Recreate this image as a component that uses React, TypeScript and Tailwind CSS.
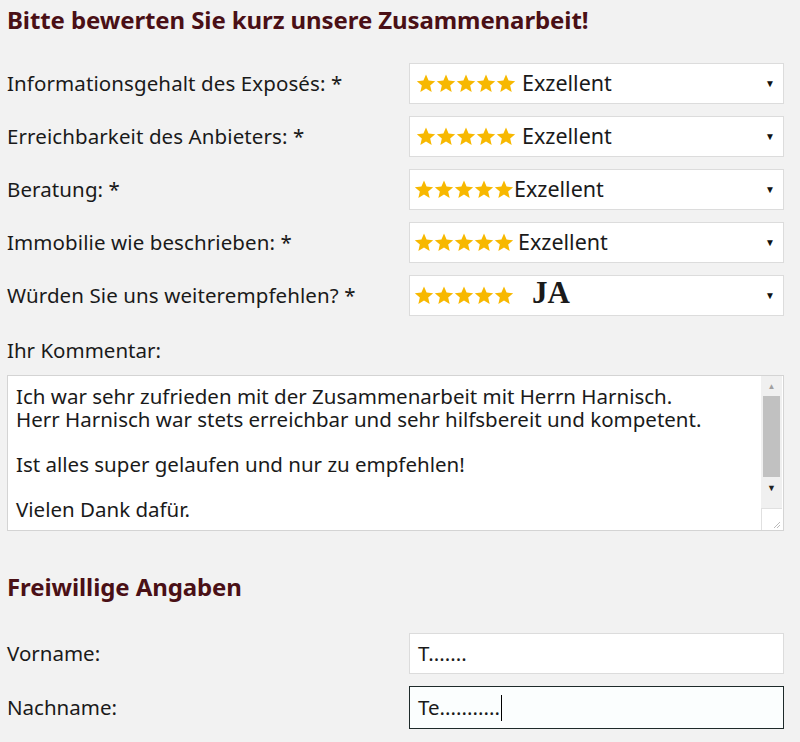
import React from "react";

const rows = [
  { label: "Informationsgehalt des Exposés: *", value: "Exzellent", gap: "gap-[6px]", pl: "pl-[6px]" },
  { label: "Erreichbarkeit des Anbieters: *", value: "Exzellent", gap: "gap-[6px]", pl: "pl-[6px]" },
  { label: "Beratung: *", value: "Exzellent", gap: "gap-0", pl: "pl-[4px]" },
  { label: "Immobilie wie beschrieben: *", value: "Exzellent", gap: "gap-[4px]", pl: "pl-[4px]" },
  { label: "Würden Sie uns weiterempfehlen? *", value: "JA", gap: "gap-[18px]", pl: "pl-[4px]" },
];

function Star() {
  return (
    <svg width="20" height="21" viewBox="0 0 24 24">
      <path
        d="M12 1.2l3.1 7.3 7.9.7-6 5.2 1.8 7.8L12 18.1l-6.8 4.1 1.8-7.8-6-5.2 7.9-.7z"
        fill="#f7b800"
      />
    </svg>
  );
}

function Stars() {
  return (
    <div className="flex">
      {[0, 1, 2, 3, 4].map((i) => (
        <Star key={i} />
      ))}
    </div>
  );
}

export default function App() {
  const sans = "font-['Noto_Sans',sans-serif]";
  return (
    <div className={`w-[800px] h-[742px] bg-[#f2f2f2] text-[#1a1a1a] ${sans} overflow-hidden`}>
      <div className="pl-[7px] pr-[16px] pt-[3px]">
        <h2 className="text-[24px] font-bold text-[#4a1016] leading-[34px] tracking-[-0.1px]">
          Bitte bewerten Sie kurz unsere Zusammenarbeit!
        </h2>

        <div className="mt-[26px] flex flex-col gap-[12px]">
          {rows.map((r) => (
            <div key={r.label} className="flex items-center h-[41px]">
              <div className="w-[402px] text-[20.5px] tracking-[0.1px]">{r.label}</div>
              <div className={`flex-1 h-[41px] bg-white border border-[#dcdcdc] flex items-center ${r.pl} pr-[8px]`}>
                <div className={`flex items-center ${r.gap}`}>
                  <Stars />
                  {r.value === "JA" ? (
                    <span className="font-['Liberation_Serif',serif] font-bold text-[31px] leading-none -mt-[7px]">JA</span>
                  ) : (
                    <span className="text-[21.5px]">{r.value}</span>
                  )}
                </div>
                <span className="ml-auto text-[10px] text-[#111]">▼</span>
              </div>
            </div>
          ))}
        </div>

        <div className="mt-[22px] text-[20.5px] leading-[24px]">Ihr Kommentar:</div>

        <div className="mt-[13px] h-[156px] bg-white border border-[#d4d4d4] flex">
          <div className="flex-1 pl-[8px] pt-[9px] text-[20.5px] leading-[22.5px] text-[#1a1a1a]">
            <p>Ich war sehr zufrieden mit der Zusammenarbeit mit Herrn Harnisch.</p>
            <p>Herr Harnisch war stets erreichbar und sehr hilfsbereit und kompetent.</p>
            <p className="mt-[22.5px]">Ist alles super gelaufen und nur zu empfehlen!</p>
            <p className="mt-[22.5px]">Vielen Dank dafür.</p>
          </div>
          <div className="w-[21px] flex flex-col bg-[#f0f0f0] mr-px">
            <div className="h-[20px] flex items-center justify-center text-[8px] text-[#a0a0a0]">▲</div>
            <div className="h-[81px] mx-[2px] bg-[#c1c1c1]" />
            <div className="flex-1 flex items-start justify-center pt-[4px] text-[9px] text-[#222]">▼</div>
            <div className="h-[22px] bg-white border-l border-t border-[#e0e0e0] flex items-end justify-end pr-[2px] pb-[2px]">
              <svg width="6" height="6" viewBox="0 0 6 6">
                <path d="M6 0L0 6M6 3L3 6" stroke="#aaa" strokeWidth="0.8" />
              </svg>
            </div>
          </div>
        </div>

        <h2 className="mt-[39px] text-[24px] font-bold text-[#4a1016] leading-[34px] tracking-[-0.1px]">Freiwillige Angaben</h2>

        <div className="mt-[29px] flex flex-col gap-[12px]">
          <div className="flex items-center h-[41px]">
            <div className="w-[402px] text-[20.5px]">Vorname:</div>
            <div className="flex-1 h-[41px] bg-white border border-[#dcdcdc] flex items-center pl-[8px] text-[20.5px]">
              T.......
            </div>
          </div>
          <div className="flex items-center h-[43px]">
            <div className="w-[402px] text-[20.5px]">Nachname:</div>
            <div className="flex-1 h-[43px] bg-[#fbfefe] border-[1.5px] border-[#1e2a2a] flex items-center pl-[8px] text-[20.5px]">
              <span>Te...........</span>
              <span className="w-px h-[26px] bg-black ml-[1px]" />
            </div>
          </div>
        </div>
      </div>
    </div>
  );
}
